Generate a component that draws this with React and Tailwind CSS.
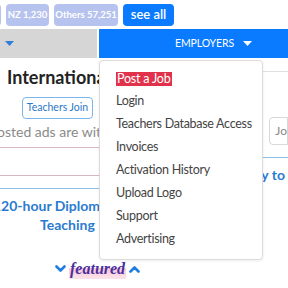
import React from "react";

function Caret({ className }) {
  return (
    <svg width="9" height="5" viewBox="0 0 9 5" className={className}>
      <path d="M0 0 L9 0 L4.5 5 Z" fill="currentColor" />
    </svg>
  );
}

function Chevron({ up, className }) {
  return (
    <svg width="11" height="8" viewBox="0 0 11 8" className={className}>
      <path
        d={up ? "M1.5 6.5 L5.5 2.5 L9.5 6.5" : "M1.5 1.5 L5.5 5.5 L9.5 1.5"}
        fill="none"
        stroke="currentColor"
        strokeWidth="2.6"
        strokeLinecap="round"
        strokeLinejoin="round"
      />
    </svg>
  );
}

export default function App() {
  const items = [
    "Login",
    "Teachers Database Access",
    "Invoices",
    "Activation History",
    "Upload Logo",
    "Support",
    "Advertising",
  ];
  return (
    <div
      className="relative w-[288px] h-[288px] overflow-hidden bg-white"
      style={{ fontFamily: 'Lato, "Noto Sans", sans-serif' }}
    >
      {/* badge row */}
      <div className="flex items-center h-[29px] pt-[1px] gap-[5px] -ml-[42px] whitespace-nowrap">
        <span className="h-[22px] w-[43px] rounded-[4px] bg-[#b7c3ef]"></span>
        <span className="h-[22px] flex items-center rounded-[4px] bg-[#b7c3ef] text-white text-[9.5px] font-bold w-[43px] justify-center">
          NZ 1,230
        </span>
        <span className="h-[22px] flex items-center justify-center rounded-[4px] bg-[#b7c3ef] text-white text-[9.5px] font-bold w-[64px]">
          Others 57,251
        </span>
        <span className="h-[22px] w-[51px] flex items-center justify-center rounded-[4px] bg-[#0a7bff] text-white text-[13px] font-semibold">
          see all
        </span>
      </div>

      {/* nav row */}
      <div className="flex h-[29px] gap-[2px]">
        <div className="w-[97px] bg-[#d6d6d6] flex items-center pl-[5px]">
          <Caret className="text-[#2f7fd8]" />
        </div>
        <div className="flex-1 bg-[#0a7bff] flex items-center justify-center pl-[40px] gap-[9px] text-white text-[10.5px] tracking-[-0.1px]">
          <span>EMPLOYERS</span>
          <Caret className="text-white" />
        </div>
      </div>

      {/* underlying content */}
      <div className="flex">
        <div className="w-[263px] flex flex-col">
          <div className="pl-[7px] pt-[7px] text-[18px] font-bold text-[#222] leading-[24px] whitespace-nowrap">
            International Jobs
          </div>
          <div className="pl-[22px] pt-[8px] flex">
            <span className="h-[22px] w-[71px] flex items-center justify-center border border-[#7cb4ec] rounded-[4px] text-[#2a78c8] text-[10.5px] whitespace-nowrap">
              Teachers Join
            </span>
          </div>
          <div className="pt-[4px] text-[14px] text-[#8a8a8a] leading-[18px] whitespace-nowrap -ml-[3px]">
            osted ads are with
          </div>
          <div className="mt-[6px] h-[29px] border-y border-[#d8b6c4] -ml-[2px]"></div>
          <div className="mt-[12px] border-t border-[#8cc0ea]"></div>
          <div className="pt-[7px] text-[14px] font-bold text-[#2a7bd0] leading-[19px] whitespace-nowrap -ml-[7px]">
            120-hour Diploma in TESOL
          </div>
          <div className="pl-[40px] text-[14px] font-bold text-[#2a7bd0] leading-[19px]">
            Teaching
          </div>
        </div>
        <div className="flex-1 flex flex-col pt-[13px]">
          <div className="border-t border-[#e0e0e0] h-[74px] flex flex-col justify-end">
            <div className="ml-[7px] h-[28px] border border-[#d8d8d8] rounded-l-[4px] flex items-center pl-[5px] text-[12px] text-[#888]">
              Jo
            </div>
          </div>
          <div className="mt-[12px] border-t border-[#8cc0ea]"></div>
          <div className="pt-[7px] -ml-[1px] text-[14px] font-bold text-[#2a7bd0] leading-[19px] whitespace-nowrap">
            y to
          </div>
        </div>
      </div>

      {/* featured */}
      <div className="absolute left-[55px] top-[259px] flex items-center gap-[3px]">
        <Chevron className="text-[#1f7fe0]" />
        <span
          className="text-[16px] font-bold italic text-[#4b2f9e] leading-[20px] px-[1px] bg-[linear-gradient(to_bottom,transparent_45%,#f7c9d8_45%,#fbe3ea_100%)]"
          style={{ fontFamily: '"Liberation Serif", serif' }}
        >
          featured
        </span>
        <Chevron up className="text-[#1f7fe0]" />
      </div>

      {/* dropdown */}
      <div className="absolute left-[99px] top-[60px] w-[164px] bg-white border border-[#dcdcdc] rounded-[4px] pt-[6px] pb-[8px] shadow-[0_1px_3px_rgba(0,0,0,0.08)]">
        <div className="h-[23px] flex items-center pl-[16px]">
          <span className="bg-[#e0334b] text-white text-[12.5px] tracking-[-0.2px] leading-[14px] px-[1px]">Post a Job</span>
        </div>
        {items.map((t) => (
          <div key={t} className="h-[23px] flex items-center pl-[16px] text-[12.5px] tracking-[-0.3px] text-[#444] whitespace-nowrap">
            {t}
          </div>
        ))}
      </div>
    </div>
  );
}
